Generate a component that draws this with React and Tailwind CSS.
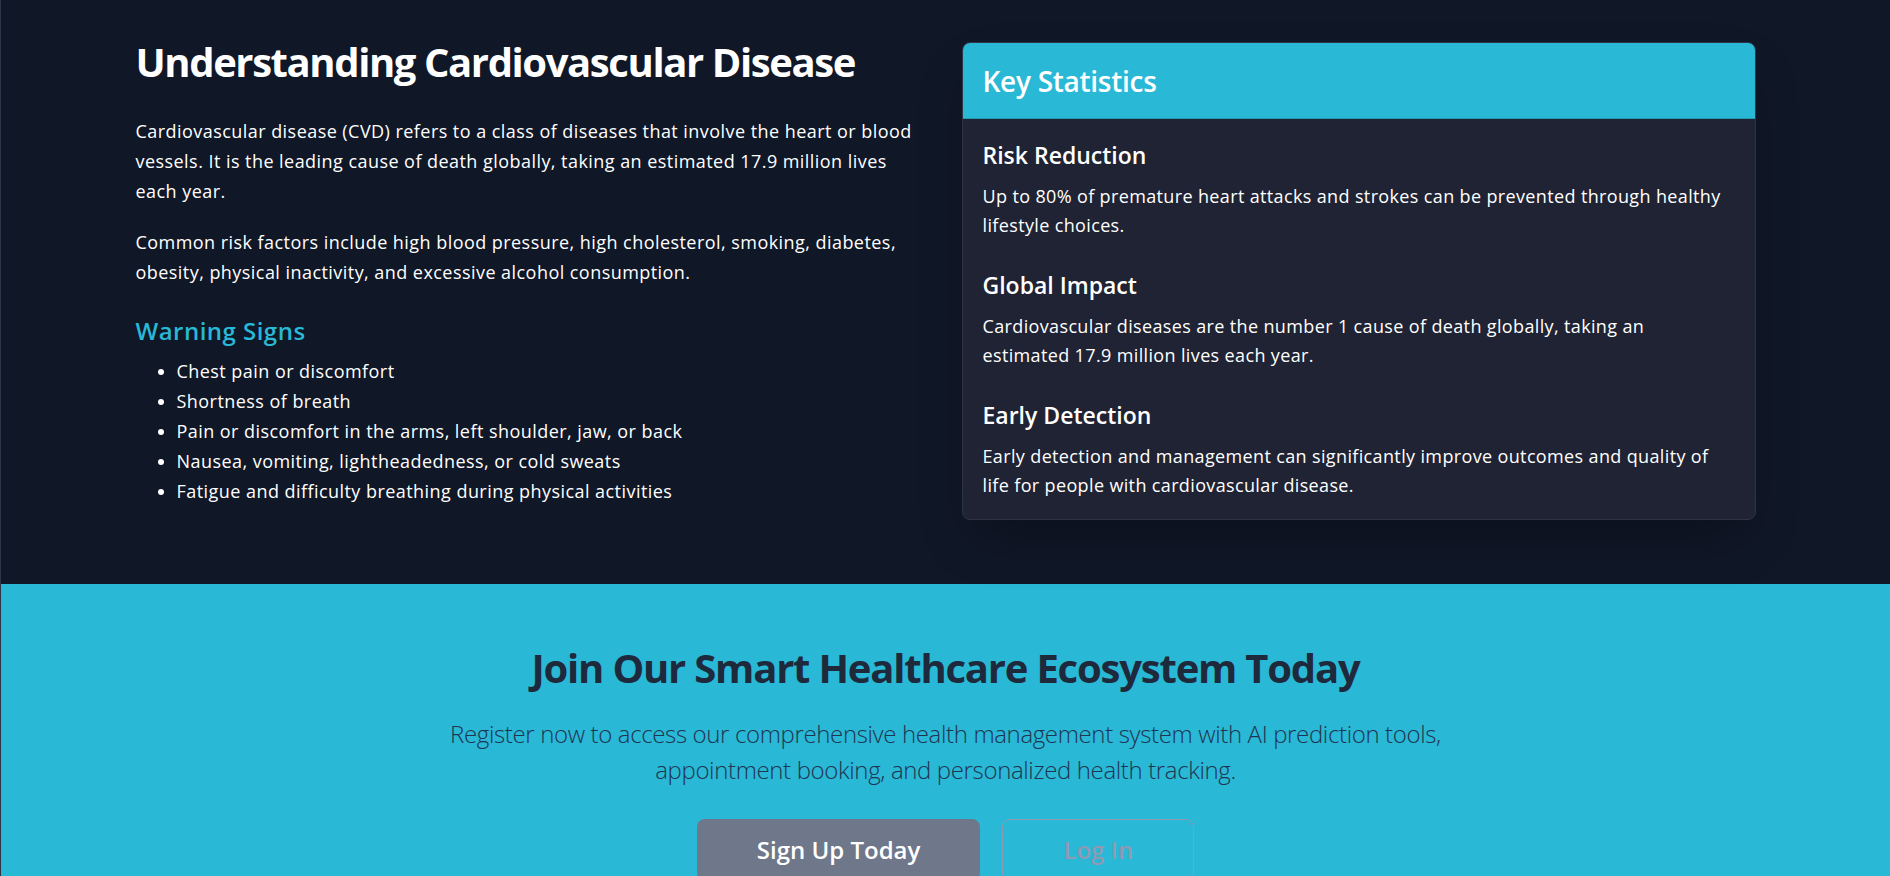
import React from 'react';

const warningSigns = [
  'Chest pain or discomfort',
  'Shortness of breath',
  'Pain or discomfort in the arms, left shoulder, jaw, or back',
  'Nausea, vomiting, lightheadedness, or cold sweats',
  'Fatigue and difficulty breathing during physical activities',
];

const stats = [
  {
    title: 'Risk Reduction',
    text: 'Up to 80% of premature heart attacks and strokes can be prevented through healthy lifestyle choices.',
  },
  {
    title: 'Global Impact',
    text: (
      <>
        Cardiovascular diseases are the number 1 cause of death globally, taking an
        <br />
        estimated 17.9 million lives each year.
      </>
    ),
  },
  {
    title: 'Early Detection',
    text: 'Early detection and management can significantly improve outcomes and quality of life for people with cardiovascular disease.',
  },
];

export default function App() {
  return (
    <div className="min-h-screen bg-[#101727] font-['Open_Sans','Noto_Sans',sans-serif] text-white border-l border-[#5a657a]/40">
      {/* --- INFO SECTION --- */}
      <section className="pt-[42px] pb-[64px]">
        <div className="mx-auto max-w-[1620px] grid grid-cols-2 gap-8 items-start">
          <div>
            <h2 className="text-[40px] leading-[40px] font-bold tracking-[-0.035em] mb-[34px]">
              Understanding Cardiovascular Disease
            </h2>
            <p className="text-[18px] leading-[30px] tracking-[0.025em] mb-[21px]">
              Cardiovascular disease (CVD) refers to a class of diseases that involve the heart or blood vessels. It is the leading cause of death globally, taking an estimated 17.9 million lives each year.
            </p>
            <p className="text-[18px] leading-[30px] tracking-[0.025em]">
              Common risk factors include high blood pressure, high cholesterol, smoking, diabetes, obesity, physical inactivity, and excessive alcohol consumption.
            </p>
            <h3 className="mt-7 mb-[9px] text-[24px] leading-[32px] font-semibold tracking-[0.02em] text-[#29b8d6]">
              Warning Signs
            </h3>
            <ul className="list-disc pl-[41px] text-[18px] leading-[30px] tracking-[0.025em]">
              {warningSigns.map((s) => (
                <li key={s}>{s}</li>
              ))}
            </ul>
          </div>

          <div className="rounded-lg border border-[#2e3446] bg-[#1f2333] overflow-hidden shadow-2xl shadow-black/30">
            <div className="bg-[#29b8d6] px-5 pt-5 pb-[19px] border-b border-[#2499b3]">
              <h3 className="text-[28px] leading-[36px] font-semibold tracking-[-0.01em]">Key Statistics</h3>
            </div>
            <div className="px-5 pt-[22px] pb-[19px]">
              {stats.map((s, i) => (
                <div key={s.title} className={i < stats.length - 1 ? 'mb-[31px]' : ''}>
                  <h4 className="text-[23px] leading-[28px] font-semibold mb-[13px]">{s.title}</h4>
                  <p className="text-[18px] leading-[29px] tracking-[0.02em]">{s.text}</p>
                </div>
              ))}
            </div>
          </div>
        </div>
      </section>

      {/* --- CTA SECTION --- */}
      <section className="bg-[#29b8d6] pt-[60px] pb-16 text-center">
        <h2 className="text-[40px] leading-[48px] font-bold tracking-[-0.03em] text-[#1e293b] mb-[24px]">
          Join Our Smart Healthcare Ecosystem Today
        </h2>
        <p className="mx-auto max-w-[1010px] text-[24px] leading-[36px] font-light tracking-[-0.015em] text-[#1f3551] mb-[31px]">
          Register now to access our comprehensive health management system with AI prediction tools, appointment booking, and personalized health tracking.
        </p>
        <div className="flex justify-center gap-[22px]">
          <button className="px-[60px] py-[14px] rounded-lg bg-[#6f778a] text-white text-[24px] leading-[32px] font-semibold">
            Sign Up Today
          </button>
          <button className="px-[60px] py-[14px] rounded-lg border border-[#8d9ab2] text-[#8e9ab3] text-[24px] leading-[32px] font-semibold">
            Log In
          </button>
        </div>
      </section>
    </div>
  );
}
